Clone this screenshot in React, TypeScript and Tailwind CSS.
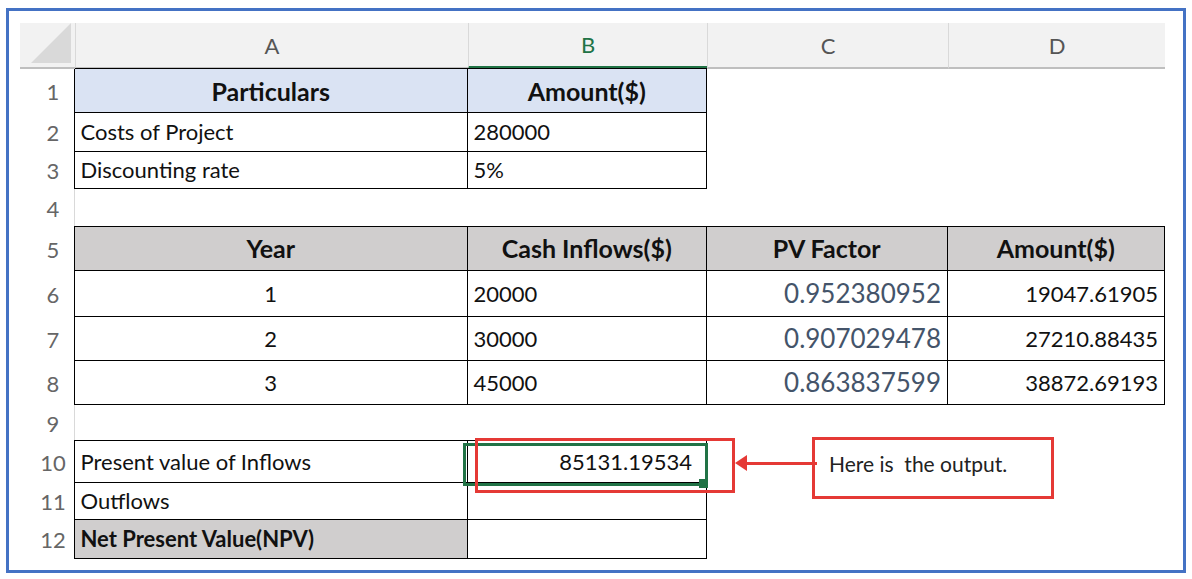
import React from "react";

const cols = [55, 393, 239, 241, 217];
const rowH = [44, 39, 37, 38, 44, 46, 44, 44, 36, 42, 37, 39];
type C = { t?: string; cls?: string };
const B = "border-[1.5px] border-black -ml-[1.5px] -mt-[1.5px]";
const rows: C[][] = [
  [{ t: "Particulars", cls: `${B} bg-[#dae3f3] font-bold justify-center text-[25px] pt-[3px]` }, { t: "Amount($)", cls: `${B} bg-[#dae3f3] font-bold justify-center text-[25px] pt-[3px]` }, {}, {}],
  [{ t: "Costs of Project", cls: B }, { t: "280000", cls: B }, {}, {}],
  [{ t: "Discounting rate", cls: B }, { t: "5%", cls: B }, {}, {}],
  [{}, {}, {}, {}],
  [
    { t: "Year", cls: `${B} bg-[#d0cece] font-bold justify-center text-[25px]` },
    { t: "Cash Inflows($)", cls: `${B} bg-[#d0cece] font-bold justify-center text-[25px]` },
    { t: "PV Factor", cls: `${B} bg-[#d0cece] font-bold justify-center text-[25px]` },
    { t: "Amount($)", cls: `${B} bg-[#d0cece] font-bold justify-center text-[25px]` },
  ],
  ...[["1", "20000", "0.952380952", "19047.61905"], ["2", "30000", "0.907029478", "27210.88435"], ["3", "45000", "0.863837599", "38872.69193"]].map((r) => [
    { t: r[0], cls: `${B} justify-center` },
    { t: r[1], cls: B },
    { t: r[2], cls: `${B} justify-end text-[26px] text-[#44546a]` },
    { t: r[3], cls: `${B} justify-end` },
  ]),
  [{}, {}, {}, {}],
  [{ t: "Present value of Inflows", cls: B }, { t: "85131.19534", cls: `${B} justify-end pr-[14px]` }, {}, {}],
  [{ t: "Outflows", cls: B }, { t: "", cls: B }, {}, {}],
  [{ t: "Net Present Value(NPV)", cls: `${B} bg-[#d0cece] font-bold` }, { t: "", cls: B }, {}, {}],
];

export default function App() {
  return (
    <div className="w-[1192px] h-[579px] bg-white p-[6px] pt-[8px]" style={{ fontFamily: "Lato, 'Open Sans', sans-serif" }}>
      <div className="w-full h-full border-[3px] border-[#4472c4] pl-[11px] pt-[12px] overflow-hidden relative">
        <div className="grid text-[22px] text-[#111]" style={{ gridTemplateColumns: cols.map((c) => c + "px").join(" "), gridTemplateRows: "46px " + rowH.map((h) => h + "px").join(" ") }}>
          <div className="bg-[#f2f2f2] border-b-2 border-[#bfbfbf] relative overflow-hidden">
            <div className="absolute right-[4px] bottom-[4px] w-0 h-0 border-l-[40px] border-l-transparent border-b-[40px] border-b-[#d9d9d9]" />
          </div>
          {["A", "B", "C", "D"].map((l) => (
            <div key={l} className={`bg-[#f2f2f2] border-l border-[#d9d9d9] flex items-center justify-center text-[22px] ${l === "B" ? "text-[#217346] bg-[#e8e8e8] border-b-[3px] border-b-[#217346]" : "text-[#555] border-b-2 border-b-[#bfbfbf]"}`}>{l}</div>
          ))}
          {rows.map((r, i) => (
            <React.Fragment key={i}>
              <div className="flex items-center justify-center text-[#666] border-r border-[#d9d9d9] pl-[12px] text-[22px]">{i + 1}</div>
              {r.map((c, j) => (
                <div key={j} className={`flex items-center px-[6px] whitespace-nowrap ${c.cls ?? ""}`}>{c.t}</div>
              ))}
            </React.Fragment>
          ))}
        </div>
        <div className="absolute left-[454px] top-[432px] w-[245px] h-[43px] border-[3px] border-[#217346]" />
        <div className="absolute left-[690px] top-[468px] w-[9px] h-[9px] bg-[#217346]" />
        <div className="absolute left-[466px] top-[427px] w-[260px] h-[55px] border-[3px] border-[#e53935]" />
        <div className="absolute left-[730px] top-[451px] w-[78px] h-[3px] bg-[#e53935]" />
        <div className="absolute left-[726px] top-[444px] w-0 h-0 border-t-[8px] border-t-transparent border-b-[8px] border-b-transparent border-r-[12px] border-r-[#e53935]" />
        <div className="absolute left-[803px] top-[426px] w-[242px] h-[62px] border-[3px] border-[#e53935] pl-[14px] pt-[8px] text-[21px] text-[#222]">Here is&nbsp; the output.</div>
      </div>
    </div>
  );
}
